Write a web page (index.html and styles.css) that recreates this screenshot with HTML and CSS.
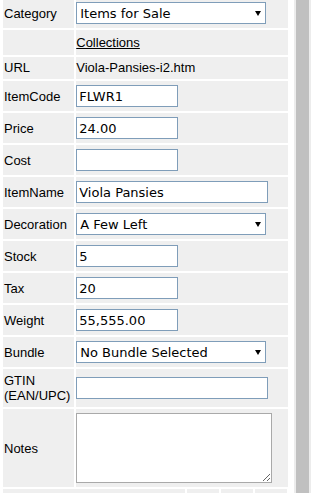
FILE: index.html
```html
<!DOCTYPE html>
<html lang="en">
<head>
    <meta charset="UTF-8">
    <meta name="viewport" content="width=device-width, initial-scale=1.0">
    <title>Edit Item</title>
    <link rel="stylesheet" href="styles.css">
</head>
<body>
    <div class="page">
        <table class="item-form">
            <tr>
                <td class="lbl">Category</td>
                <td class="val">
                    <span class="sel-wrap sel-wide">
                        <select><option>Items for Sale</option></select>
                    </span>
                </td>
            </tr>
            <tr>
                <td class="lbl"></td>
                <td class="val text-cell link-cell"><a href="#">Collections</a></td>
            </tr>
            <tr>
                <td class="lbl short">URL</td>
                <td class="val text-cell">Viola-Pansies-i2.htm</td>
            </tr>
            <tr>
                <td class="lbl">ItemCode</td>
                <td class="val"><input type="text" class="in-small" value="FLWR1"></td>
            </tr>
            <tr>
                <td class="lbl">Price</td>
                <td class="val"><input type="text" class="in-small" value="24.00"></td>
            </tr>
            <tr>
                <td class="lbl">Cost</td>
                <td class="val"><input type="text" class="in-small" value=""></td>
            </tr>
            <tr>
                <td class="lbl">ItemName</td>
                <td class="val"><input type="text" class="in-wide" value="Viola Pansies"></td>
            </tr>
            <tr>
                <td class="lbl">Decoration</td>
                <td class="val">
                    <span class="sel-wrap sel-wide">
                        <select><option>A Few Left</option></select>
                    </span>
                </td>
            </tr>
            <tr>
                <td class="lbl">Stock</td>
                <td class="val"><input type="text" class="in-small" value="5"></td>
            </tr>
            <tr>
                <td class="lbl">Tax</td>
                <td class="val"><input type="text" class="in-small" value="20"></td>
            </tr>
            <tr>
                <td class="lbl">Weight</td>
                <td class="val"><input type="text" class="in-small" value="55,555.00"></td>
            </tr>
            <tr>
                <td class="lbl">Bundle</td>
                <td class="val">
                    <span class="sel-wrap sel-wide">
                        <select><option>No Bundle Selected</option></select>
                    </span>
                </td>
            </tr>
            <tr>
                <td class="lbl two-line">GTIN<br>(EAN/UPC)</td>
                <td class="val"><input type="text" class="in-wide" value=""></td>
            </tr>
            <tr>
                <td class="lbl">Notes</td>
                <td class="val"><textarea class="notes"></textarea></td>
            </tr>
            <tr>
                <td class="btn-row" colspan="2">
                    <div class="btn-cells">
                        <div></div>
                        <div></div>
                        <div></div>
                        <div></div>
                    </div>
                </td>
            </tr>
        </table>
        <div class="divider"></div>
    </div>
</body>
</html>
```

FILE: styles.css
```css
body { margin: 0; font-family: "Liberation Sans", Arial, sans-serif; font-size: 13px; color: #000; background: #fff; overflow: hidden; }
.page { display: flex; align-items: stretch; min-height: 520px; margin-top: -4px; }
.item-form { border-spacing: 2px; margin-left: 1px; width: 289px; align-self: flex-start; }
.item-form td { background: #efefef; padding: 0; vertical-align: middle; }
.lbl { width: 68px; padding: 4px 2px 4px 1px !important; line-height: 15px; white-space: nowrap; }
.lbl.short { line-height: 14px; }
.val { width: 211px; padding: 4px 0 !important; line-height: 0; }
.text-cell { line-height: 14px; }
.link-cell { line-height: 17px; }
.link-cell a { color: #000; text-decoration: underline; }
.two-line { line-height: 15px; white-space: normal; }

input, select, textarea { font-family: "DejaVu Sans", Verdana, sans-serif; font-size: 13px; color: #000; margin: 0; box-sizing: border-box; vertical-align: top; }
input[type="text"] { height: 22px; border: 1px solid #7f9db9; padding: 0 2px; background: #fff; }
.in-small { width: 102px; }
.in-wide { width: 192px; }

.sel-wrap { position: relative; display: inline-block; vertical-align: top; }
.sel-wide { width: 190px; }
.sel-wrap select { -webkit-appearance: none; appearance: none; width: 100%; height: 22px; border: 1px solid #7f9db9; background: #fff; padding: 0 16px 0 3px; border-radius: 0; }
.sel-wrap::after { content: ""; position: absolute; right: 5px; top: 9px; border-left: 3px solid transparent; border-right: 3px solid transparent; border-top: 5px solid #000; pointer-events: none; }

.notes { width: 196px; height: 70px; border: 1px solid #a9a9a9; padding: 2px; resize: both; background: #fff; }

.item-form td.btn-row { background: transparent; }
.btn-cells { display: grid; grid-template-columns: 182px 32px 32px 32px; gap: 2px; }
.btn-cells div { background: #efefef; height: 30px; }

.divider { width: 13px; margin-left: 4px; background: #c0c0c0; border-left: 2px solid #ececec; border-right: 2px solid #ececec; }
```
